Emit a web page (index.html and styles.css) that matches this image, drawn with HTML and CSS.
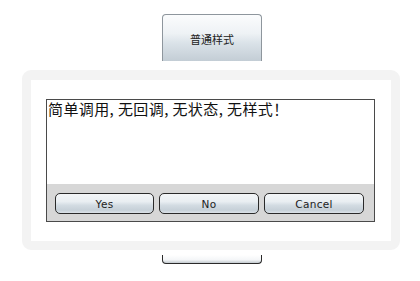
FILE: index.html
```html
<!DOCTYPE html>
<html>
<head>
<meta charset="utf-8">
<link rel="stylesheet" href="styles.css">
</head>
<body>
<div class="page">
  <div class="top-btn"><span>普通样式</span></div>
  <div class="frame">
    <div class="dialog">
      <div class="msg">简单调用, 无回调, 无状态, 无样式！</div>
      <div class="bar">
        <div class="btn btn-yes">Yes</div>
        <div class="btn">No</div>
        <div class="btn">Cancel</div>
      </div>
    </div>
  </div>
  <div class="bottom-btn"></div>
</div>
</body>
</html>
```
FILE: styles.css
```css
html, body {
  margin: 0;
  padding: 0;
  background: #ffffff;
}
.page {
  width: 420px;
  height: 281px;
  overflow: hidden;
  padding-top: 14px;
  box-sizing: border-box;
}
.top-btn {
  margin-left: 162px;
  width: 100px;
  height: 47px;
  box-sizing: border-box;
  border: 1px solid #8e969d;
  border-bottom: none;
  border-radius: 4px 4px 0 0;
  background: linear-gradient(#fbfcfd 0%, #eef2f5 40%, #dbe3e9 60%, #c3cdd5 100%);
  display: flex;
  justify-content: center;
  padding-top: 17px;
  font-family: "Noto Sans CJK SC", sans-serif;
  font-size: 11px;
  color: #222;
  line-height: 14px;
}
.frame {
  margin-top: 9px;
  margin-left: 22px;
  width: 378px;
  height: 180px;
  box-sizing: border-box;
  border: 9px solid #f3f3f3;
  border-top-width: 10px;
  border-radius: 9px;
  background: #ffffff;
  padding: 19px 0 0 15px;
}
.dialog {
  width: 329px;
  height: 123px;
  box-sizing: border-box;
  border: 1px solid #4a4a4a;
  display: flex;
  flex-direction: column;
  background: #fff;
}
.msg {
  height: 84px;
  font-family: "Noto Sans CJK SC", sans-serif;
  font-size: 15px;
  line-height: 18px;
  color: #111;
  padding-left: 1px;
  letter-spacing: 0.4px;
  white-space: nowrap;
}
.bar {
  flex: 1;
  background: #d7d7d7;
  display: flex;
  gap: 5px;
  padding: 9px 9px 0 8px;
}
.btn {
  width: 100px;
  height: 21px;
  box-sizing: border-box;
  border: 1px solid #2a2a2a;
  border-radius: 5px;
  background: linear-gradient(#f3f5f7 0%, #e9eef2 40%, #d2dbe2 60%, #c6d0d8 85%, #dbe2e8 100%);
  display: flex;
  align-items: center;
  justify-content: center;
  font-family: "DejaVu Sans", sans-serif;
  font-size: 10.5px;
  letter-spacing: 0.3px;
  color: #222;
}
.btn-yes {
  width: 99px;
}
.bottom-btn {
  margin-top: 5px;
  margin-left: 162px;
  width: 100px;
  height: 9px;
  box-sizing: border-box;
  border: 1px solid #2a2a2a;
  border-top: none;
  border-radius: 0 0 4px 4px;
  background: linear-gradient(#ffffff 0%, #f4f6f8 60%, #c3cacf 100%);
}
```
